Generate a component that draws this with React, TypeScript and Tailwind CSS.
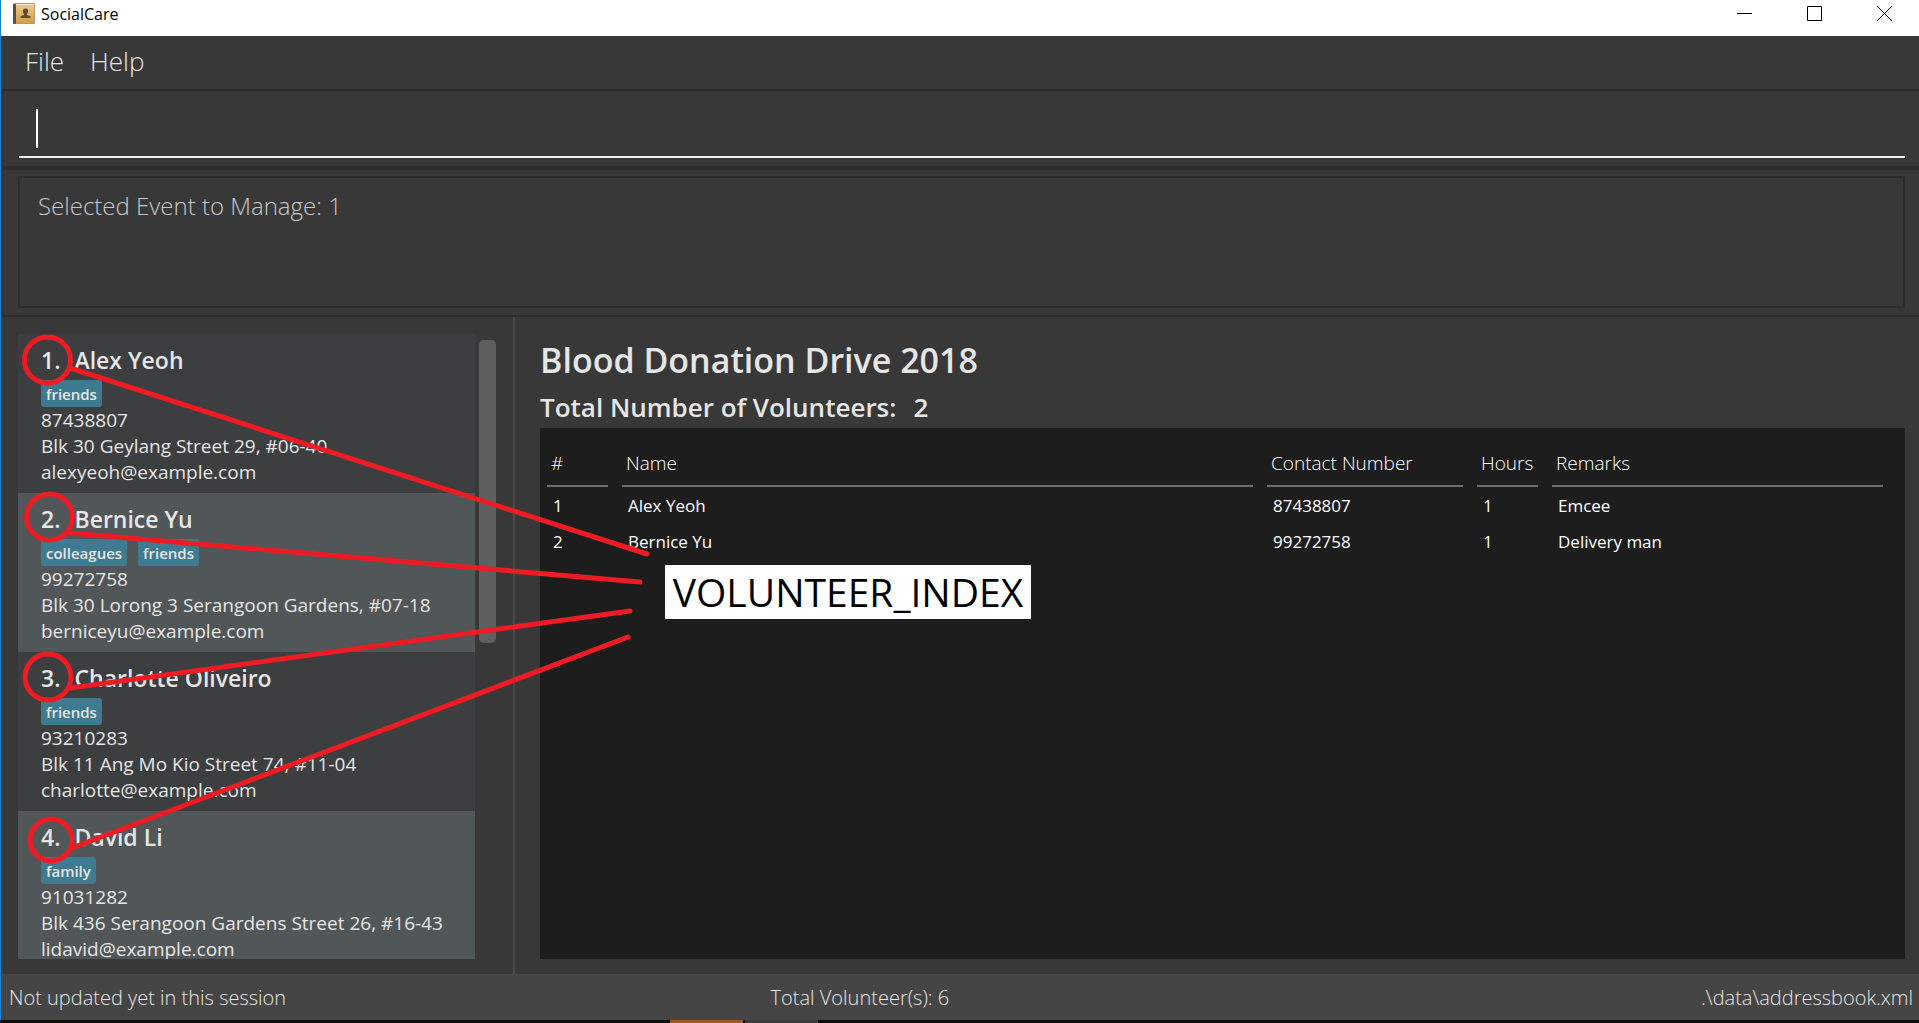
import React from "react";

type Person = {
  name: string;
  tags: string[];
  phone: string;
  address: string;
  email: string;
};

const people: Person[] = [
  { name: "Alex Yeoh", tags: ["friends"], phone: "87438807", address: "Blk 30 Geylang Street 29, #06-40", email: "alexyeoh@example.com" },
  { name: "Bernice Yu", tags: ["colleagues", "friends"], phone: "99272758", address: "Blk 30 Lorong 3 Serangoon Gardens, #07-18", email: "berniceyu@example.com" },
  { name: "Charlotte Oliveiro", tags: ["friends"], phone: "93210283", address: "Blk 11 Ang Mo Kio Street 74, #11-04", email: "charlotte@example.com" },
  { name: "David Li", tags: ["family"], phone: "91031282", address: "Blk 436 Serangoon Gardens Street 26, #16-43", email: "lidavid@example.com" },
];

const columns = [
  { label: "#", width: "w-[75px]" },
  { label: "Name", width: "" },
  { label: "Contact Number", width: "w-[210px]" },
  { label: "Hours", width: "w-[75px]" },
  { label: "Remarks", width: "w-[345px]" },
];

const rows = [
  ["1", "Alex Yeoh", "87438807", "1", "Emcee"],
  ["2", "Bernice Yu", "99272758", "1", "Delivery man"],
];

function BookIcon() {
  return (
    <svg width="22" height="22" viewBox="0 0 22 22" aria-hidden="true">
      <defs>
        <linearGradient id="cover" x1="0" y1="0" x2="0" y2="1">
          <stop offset="0" stopColor="#e9c98c" />
          <stop offset="1" stopColor="#d3a04b" />
        </linearGradient>
      </defs>
      <rect x="0" y="0" width="22" height="21" rx="1" fill="#b79868" />
      <rect x="1" y="1" width="20" height="2" fill="#f4ead6" />
      <rect x="0" y="1" width="3" height="20" rx="1" fill="#5e4a41" />
      <rect x="3" y="2" width="18" height="18" fill="url(#cover)" />
      <path d="M12.500 5.500c1.700 0 2.800 1.100 2.600 2.900-.1 1.200-.7 1.900-1.100 2.500v1.100c1.300.5 3 .8 3.400 1.600.2.500.2.900.2 1.400H7.400c0-.5 0-.9.2-1.400.4-.8 2.100-1.100 3.400-1.600v-1.100c-.4-.6-1-1.300-1.100-2.500-.2-1.800.9-2.900 2.600-2.900Z" fill="#614a2c" />
    </svg>
  );
}

function TitleBar() {
  const button = "flex h-[27px] w-[70px] items-center justify-center";
  return (
    <header className="flex h-9 shrink-0 items-start justify-between bg-white text-black">
      <div className="flex items-center gap-1.5 pt-0.5 pl-3">
        <BookIcon />
        <h1 className="text-base leading-6">SocialCare</h1>
      </div>
      <div className="flex">
        <button type="button" aria-label="Minimize" className={button}>
          <svg width="15" height="15" stroke="#000" fill="none"><path d="M0 7.500h15" /></svg>
        </button>
        <button type="button" aria-label="Maximize" className={button}>
          <svg width="15" height="15" stroke="#000" fill="none"><path d="M.5.5h14v14H.5Z" /></svg>
        </button>
        <button type="button" aria-label="Close" className={button}>
          <svg width="15" height="15" stroke="#000" fill="none"><path d="m0 0 15 15M15 0 0 15" /></svg>
        </button>
      </div>
    </header>
  );
}

function PersonCard({ person, index }: { person: Person; index: number }) {
  return (
    <li className="h-[159px] shrink-0 pt-[10px] pl-[23px] text-[#e6e6e6] odd:bg-[#3c3e3f] even:bg-[#515658]">
      <h2 className="flex gap-3.5 text-[23px] leading-[32px] font-semibold whitespace-nowrap">
        <span>{index}.</span>
        <span>{person.name}</span>
      </h2>
      <div className="mt-1 flex gap-[11px]">
        {person.tags.map((tag) => (
          <span key={tag} className="h-[27px] rounded-[3px] bg-[#3e7b91] px-[5px] text-[15px] leading-[28px] font-semibold">
            {tag}
          </span>
        ))}
      </div>
      <div className="text-[19px] leading-[26px] whitespace-nowrap">
        <p>{person.phone}</p>
        <p>{person.address}</p>
        <p>{person.email}</p>
      </div>
    </li>
  );
}

function VolunteerTable() {
  return (
    <table className="w-full table-fixed border-collapse text-left text-white">
      <thead>
        <tr>
          {columns.map((c) => (
            <th key={c.label} scope="col" className={"px-[7px] pt-[17px] pb-0 font-light " + c.width}>
              <div className="h-[42px] border-b-2 border-[#6e6e6e] pl-1 text-[19px] leading-[36px]">{c.label}</div>
            </th>
          ))}
        </tr>
      </thead>
      <tbody>
        {rows.map((r) => (
          <tr key={r[0]} className="h-9">
            {r.map((cell, i) => (
              <td key={i} className="py-0 pl-[13px] text-[17px] leading-[36px]">
                <span className="block pt-px leading-[35px]">{cell}</span>
              </td>
            ))}
          </tr>
        ))}
      </tbody>
    </table>
  );
}

const circles = [
  { cx: 47.5, cy: 360, r: 23 },
  { cx: 49.5, cy: 517, r: 23 },
  { cx: 48, cy: 677, r: 23 },
  { cx: 51, cy: 840, r: 21 },
];

/* Red pointers from each list index to the VOLUNTEER_INDEX label. */
function Annotations() {
  return (
    <>
      <svg className="pointer-events-none absolute top-0 left-0" width="700" height="900" fill="none" stroke="#ed1c24" strokeWidth="5" strokeLinecap="round" aria-hidden="true">
        {circles.map((c) => (
          <circle key={c.cy} cx={c.cx} cy={c.cy} r={c.r} />
        ))}
        <path d="M70 368 647 554M70 533 640 582M70 688 630 611M72 848 628 637" />
      </svg>
      <div className="absolute top-[565px] left-[665px] flex h-[54px] w-[366px] items-center justify-center bg-white text-[39px] text-black">
        VOLUNTEER_INDEX
      </div>
    </>
  );
}

export default function App() {
  return (
    <div className="relative flex h-screen flex-col overflow-hidden bg-[#383838] font-['Open_Sans',sans-serif]">
      <div className="flex min-h-0 flex-1 flex-col border-l border-[#1883d7]">
        <TitleBar />
        <nav className="flex h-[53px] shrink-0 items-center gap-[26px] pb-0.5 pl-6 text-[26px] font-light text-[#e6e6e6]">
          <button type="button">File</button>
          <button type="button">Help</button>
        </nav>
        <div className="flex h-[79px] shrink-0 flex-col justify-end border-y-2 border-l-2 border-[#2d2d2d] pr-3.5 pb-2 pl-4">
          <div className="flex h-[49px] items-start border-b-2 border-[#eeeeee] pl-[17px]">
            <span className="h-[39px] w-0.5 bg-white" />
            <input aria-label="Command" className="h-[39px] flex-1 bg-transparent text-[26px] font-light text-white outline-none" />
          </div>
        </div>
        <div className="h-[149px] shrink-0 border-y-2 border-l-2 border-[#2d2d2d] pt-[6px] pr-3.5 pb-[7px] pl-[15px]">
          <output className="block h-full border-2 border-[#2b2b2b] px-[18px] pt-2.5 text-2xl leading-9 font-light text-[#c8c8c8]">
            Selected Event to Manage: 1
          </output>
        </div>
        <main className="flex min-h-0 flex-1">
          <section aria-label="Volunteers" className="flex w-[514px] shrink-0 gap-1 border-r-2 border-[#4b4b4b] pt-[17px] pr-4 pb-[15px] pl-[17px]">
            <ol className="flex min-h-0 w-[457px] flex-col overflow-hidden">
              {people.map((p, i) => (
                <PersonCard key={p.name} person={p} index={i + 1} />
              ))}
            </ol>
            <div className="pt-[6px]">
              <div className="h-[303px] w-[17px] rounded-[5px] bg-[#5f5f5f]" />
            </div>
          </section>
          <section aria-label="Event" className="flex min-w-0 flex-1 flex-col pt-[17px] pr-3.5 pb-[15px] pl-[25px] font-semibold text-[#e6e6e6]">
            <h2 className="text-[34px] leading-[52px]">Blood Donation Drive 2018</h2>
            <p className="flex gap-[17px] text-[26px] leading-[42px]">
              <span>Total Number of Volunteers:</span>
              <span>2</span>
            </p>
            <div className="min-h-0 flex-1 bg-[#1d1d1d] pr-[15px] font-normal">
              <VolunteerTable />
            </div>
          </section>
        </main>
        <footer className="grid h-[46px] shrink-0 grid-cols-[2fr_2fr_1fr] items-center bg-[#454545] pt-0.5 pr-1.5 pl-2 text-xl font-light whitespace-nowrap text-[#e6e6e6]">
          <span>Not updated yet in this session</span>
          <span>Total Volunteer(s): 6</span>
          <span className="text-right">.\data\addressbook.xml</span>
        </footer>
      </div>
      <div className="flex h-[3px] shrink-0 gap-0.5 bg-[#0b0f0c] pl-[670px]">
        <div className="w-[73px] bg-[#a2571d]" />
        <div className="w-[73px] bg-[#3c3e3d]" />
      </div>
      <Annotations />
    </div>
  );
}
